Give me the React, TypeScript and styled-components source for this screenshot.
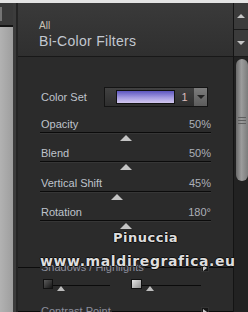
import React from "react";
import styled, { createGlobalStyle } from "styled-components";

const Global = createGlobalStyle`
  html, body { margin: 0; padding: 0; background: #2a2a2a; }
  body { font-family: "Liberation Sans", Arial, sans-serif; }
`;

const Screen = styled.div`
  width: 248px;
  height: 312px;
  overflow: hidden;
  display: flex;
  flex-direction: column;
  position: relative;
  background: #2a2a2a;
`;

const TopStrip = styled.div`
  height: 3px;
  flex: none;
  background: #e4e4e4;
`;

const Main = styled.div`
  flex: 1;
  display: flex;
  min-height: 0;
`;

const Dock = styled.div`
  width: 13px;
  flex: none;
  display: flex;
  flex-direction: column;
`;

const DockTop = styled.div`
  height: 22px;
  background: #393939;
  display: flex;
  align-items: center;
`;

const DockNotch = styled.div`
  width: 2px;
  height: 14px;
  background: #747474;
`;

const DockRule = styled.div`
  height: 2px;
  background: #141414;
`;

const DockBody = styled.div`
  flex: 1;
  background: linear-gradient(to right, #b2b2b2, #9e9e9e);
`;

const Divider = styled.div`
  width: 5px;
  flex: none;
  background: linear-gradient(to right, #3c3c3c 0 3px, #242424 3px 5px);
`;

const Panel = styled.div`
  flex: 1;
  display: flex;
  flex-direction: column;
  min-width: 0;
`;

const Header = styled.div`
  height: 54px;
  flex: none;
  box-sizing: border-box;
  padding: 17px 0 0 21px;
  background: linear-gradient(to bottom, #3a3a3a, #2f2f2f);
  border-bottom: 1px solid #181818;
  display: flex;
  flex-direction: column;
`;

const Crumb = styled.div`
  font-size: 10px;
  line-height: 12px;
  color: #c9c3b6;
`;

const Title = styled.div`
  font-size: 14px;
  line-height: 17px;
  color: #c2c8d0;
  margin-top: 1px;
  letter-spacing: 0.3px;
`;

const Body = styled.div`
  flex: 1;
  display: flex;
  flex-direction: column;
  padding-top: 30px;
  background: #2b2b2b;
`;

const ColorSetRow = styled.div`
  height: 20px;
  display: flex;
  align-items: center;
  justify-content: space-between;
  padding: 0 25px 0 23px;
`;

const Label = styled.span`
  font-size: 11px;
  line-height: 13px;
  color: #bfc3cc;
`;

const Value = styled.span`
  font-size: 11px;
  line-height: 13px;
  color: #adb0b8;
`;

const ColorBox = styled.div`
  width: 104px;
  height: 20px;
  box-sizing: border-box;
  border: 1px solid #141414;
  background: linear-gradient(to bottom, #414141, #2e2e2e);
  display: flex;
  align-items: center;
`;

const Swatch = styled.div`
  width: 59px;
  height: 14px;
  margin-left: 11px;
  box-sizing: border-box;
  border: 1px solid #111;
  background: linear-gradient(to bottom, #5d56bf, #a49be0 55%, #d3c8ee);
`;

const SetNum = styled.span`
  flex: 1;
  text-align: center;
  font-size: 11px;
  line-height: 13px;
  color: #dcbcbc;
`;

const DropBtn = styled.div`
  width: 13px;
  align-self: stretch;
  background: linear-gradient(to bottom, #7c7c7c, #5c5c5c);
  display: flex;
  align-items: center;
  justify-content: center;
`;

const DownTri = styled.div<{ $color: string }>`
  width: 0;
  height: 0;
  border-left: 4px solid transparent;
  border-right: 4px solid transparent;
  border-top: 4px solid ${(p) => p.$color};
`;

const UpTri = styled.div<{ $color: string }>`
  width: 0;
  height: 0;
  border-left: 4px solid transparent;
  border-right: 4px solid transparent;
  border-bottom: 4px solid ${(p) => p.$color};
`;

const RightTri = styled.div`
  width: 0;
  height: 0;
  border-top: 3px solid transparent;
  border-bottom: 3px solid transparent;
  border-left: 4px solid #c8c8c8;
`;

const SliderRow = styled.div<{ $top: number }>`
  margin-top: ${(p) => p.$top}px;
  padding: 0 22px 0 22px;
  display: flex;
  flex-direction: column;
`;

const LabelLine = styled.div`
  height: 13px;
  display: flex;
  justify-content: space-between;
  padding-left: 1px;
`;

const Track = styled.div`
  margin-top: 1px;
  height: 1px;
  background: #0b0b0b;
  box-shadow: 0 1px 0 #363636;
`;

const ThumbArea = styled.div`
  height: 9px;
  position: relative;
`;

const Thumb = styled.div`
  position: absolute;
  top: 2px;
  width: 0;
  height: 0;
  margin-left: -6px;
  border-left: 6px solid transparent;
  border-right: 6px solid transparent;
  border-bottom: 6px solid #c4c4c4;
`;

const SectionHeader = styled.div<{ $top: number }>`
  margin-top: ${(p) => p.$top}px;
  height: 13px;
  display: flex;
  align-items: center;
`;

const Rule = styled.div<{ $w?: number }>`
  height: 1px;
  background: #0c0c0c;
  ${(p) => (p.$w ? `width: ${p.$w}px; flex: none;` : "flex: 1;")}
`;

const SectionTitle = styled.span`
  font-size: 11px;
  line-height: 13px;
  color: #8c8e9c;
  padding: 0 1px 0 1px;
`;

const SectionBtn = styled.div`
  width: 8px;
  height: 9px;
  flex: none;
  background: #171717;
  border: 1px solid #333;
  box-sizing: border-box;
  display: flex;
  align-items: center;
  justify-content: center;
`;

const SwatchRow = styled.div`
  margin-top: 5px;
  height: 13px;
  display: flex;
  padding-left: 25px;
  gap: 21px;
`;

const MiniGroup = styled.div`
  display: flex;
`;

const MiniSwatch = styled.div<{ $light?: boolean }>`
  width: ${(p) => (p.$light ? 11 : 10)}px;
  height: 10px;
  box-sizing: border-box;
  border: 1px solid #111;
  background: ${(p) =>
    p.$light
      ? "linear-gradient(135deg, #e8e8e8, #8e8e8e)"
      : "linear-gradient(135deg, #5c5c5c, #151515)"};
`;

const MiniSlider = styled.div<{ $w: number }>`
  width: ${(p) => p.$w}px;
  position: relative;
`;

const MiniLine = styled.div`
  margin-top: 6px;
  height: 1px;
  background: #0b0b0b;
`;

const MiniThumb = styled.div`
  position: absolute;
  top: 7px;
  width: 0;
  height: 0;
  border-left: 4px solid transparent;
  border-right: 4px solid transparent;
  border-bottom: 5px solid #bdbdbd;
`;

const Scrollbar = styled.div`
  width: 15px;
  flex: none;
  box-sizing: border-box;
  border-left: 1px solid #141414;
  display: flex;
  flex-direction: column;
`;

const ScrollBtn = styled.div<{ $h: number }>`
  height: ${(p) => p.$h}px;
  flex: none;
  box-sizing: border-box;
  background: #3b3b3b;
  border-bottom: 1px solid #1a1a1a;
  display: flex;
  align-items: center;
  justify-content: center;
`;

const ScrollTrack = styled.div`
  flex: 1;
  background: #222;
  padding: 2px 0 0 2px;
`;

const ScrollThumb = styled.div`
  width: 12px;
  height: 122px;
  border-radius: 6px;
  background: linear-gradient(to right, #6a6a6a, #9c9c9c 45%, #7c7c7c);
  display: flex;
  flex-direction: column;
  align-items: center;
  justify-content: center;
  gap: 2px;
`;

const Grip = styled.div`
  width: 8px;
  height: 1px;
  background: #5e5e5e;
`;

const Watermark = styled.div`
  position: absolute;
  left: 40px;
  top: 229px;
  display: flex;
  flex-direction: column;
  font-family: "DejaVu Sans", sans-serif;
  font-weight: bold;
  color: #dedede;
  text-shadow: 1px 0 0 #111, -1px 0 0 #111, 0 1px 0 #111, 0 -1px 0 #111;
  pointer-events: none;
`;

const WmName = styled.span`
  font-size: 13px;
  line-height: 18px;
  margin-left: 73px;
  letter-spacing: 0.5px;
`;

const WmSite = styled.span`
  font-size: 14px;
  line-height: 18px;
  margin-top: 5px;
  letter-spacing: 0.6px;
`;

const sliders = [
  { label: "Opacity", value: "50%", pct: 50, top: 11 },
  { label: "Blend", value: "50%", pct: 50, top: 5 },
  { label: "Vertical Shift", value: "45%", pct: 45, top: 6 },
  { label: "Rotation", value: "180°", pct: 50, top: 5 },
];

export default function App() {
  return (
    <>
      <Global />
      <Screen>
        <TopStrip />
        <Main>
          <Dock>
            <DockTop>
              <DockNotch />
            </DockTop>
            <DockRule />
            <DockBody />
          </Dock>
          <Divider />
          <Panel>
            <Header>
              <Crumb>All</Crumb>
              <Title>Bi-Color Filters</Title>
            </Header>
            <Body>
              <ColorSetRow>
                <Label>Color Set</Label>
                <ColorBox>
                  <Swatch />
                  <SetNum>1</SetNum>
                  <DropBtn>
                    <DownTri $color="#222" />
                  </DropBtn>
                </ColorBox>
              </ColorSetRow>
              {sliders.map((s) => (
                <SliderRow key={s.label} $top={s.top}>
                  <LabelLine>
                    <Label>{s.label}</Label>
                    <Value>{s.value}</Value>
                  </LabelLine>
                  <Track />
                  <ThumbArea>
                    <Thumb style={{ left: `${s.pct}%` }} />
                  </ThumbArea>
                </SliderRow>
              ))}
              <SectionHeader $top={31}>
                <Rule $w={22} />
                <SectionTitle>Shadows / Highlights</SectionTitle>
                <Rule />
                <SectionBtn>
                  <RightTri />
                </SectionBtn>
                <Rule $w={24} />
              </SectionHeader>
              <SwatchRow>
                <MiniGroup>
                  <MiniSwatch />
                  <MiniSlider $w={57}>
                    <MiniLine />
                    <MiniThumb style={{ left: "4px" }} />
                  </MiniSlider>
                </MiniGroup>
                <MiniGroup>
                  <MiniSwatch $light />
                  <MiniSlider $w={59}>
                    <MiniLine />
                    <MiniThumb style={{ left: "4px" }} />
                  </MiniSlider>
                </MiniGroup>
              </SwatchRow>
              <SectionHeader $top={13}>
                <Rule $w={22} />
                <SectionTitle>Contrast Point</SectionTitle>
                <Rule />
                <SectionBtn>
                  <RightTri />
                </SectionBtn>
                <Rule $w={24} />
              </SectionHeader>
            </Body>
          </Panel>
          <Scrollbar>
            <ScrollBtn $h={27}>
              <UpTri $color="#c4c4c4" />
            </ScrollBtn>
            <ScrollBtn $h={27}>
              <DownTri $color="#c4c4c4" />
            </ScrollBtn>
            <ScrollTrack>
              <ScrollThumb>
                <Grip />
                <Grip />
                <Grip />
              </ScrollThumb>
            </ScrollTrack>
          </Scrollbar>
        </Main>
        <Watermark>
          <WmName>Pinuccia</WmName>
          <WmSite>www.maldiregrafica.eu</WmSite>
        </Watermark>
      </Screen>
    </>
  );
}
